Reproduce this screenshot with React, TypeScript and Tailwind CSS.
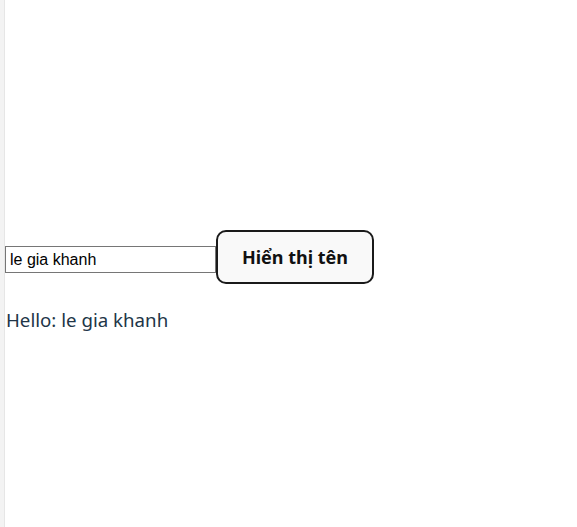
import React, { useState } from "react";

export default function App() {
  const [name, setName] = useState("le gia khanh");
  return (
    <div className="flex min-h-[527px] w-[577px] bg-white">
      <div className="w-[5px] shrink-0 border-r border-[#e6e6e6] bg-[#f3f3f3]" />
      <div className="flex flex-col pt-[230px]">
        <div className="flex items-start">
          <input
            value={name}
            onChange={(e) => setName(e.target.value)}
            className="mt-[16px] h-[27px] w-[211px] border border-[#767676] bg-white px-[4px] text-[16px] text-black outline-none [font-family:'Liberation_Sans',Arial,sans-serif]"
          />
          <button className="h-[54px] w-[158px] rounded-[10px] border-2 border-[#1a1a1a] bg-[#f9f9f9] text-[18px] font-bold text-[#111] [font-family:'Noto_Sans',sans-serif]">
            Hiển thị tên
          </button>
        </div>
        <p className="mt-[22px] pl-[1px] text-[18.7px] text-[#213547] [font-family:'Noto_Sans',sans-serif]">
          Hello: {name}
        </p>
      </div>
    </div>
  );
}
